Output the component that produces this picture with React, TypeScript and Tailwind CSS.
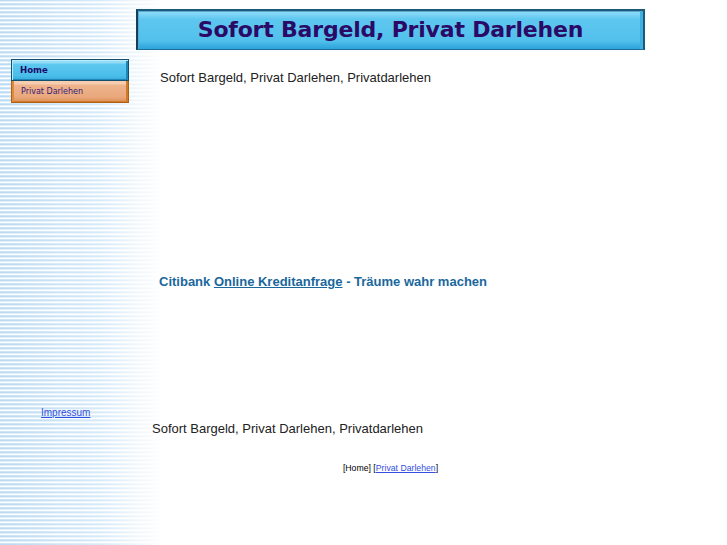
export default function App() {
  return (
    <div className="min-h-[545px] w-full bg-white bg-[linear-gradient(to_right,rgba(255,255,255,0)_0px,rgba(255,255,255,0.45)_100px,#ffffff_162px),repeating-linear-gradient(to_bottom,#b8daf3_0px,#b8daf3_1px,#e2f0fb_1px,#e2f0fb_2px,#ffffff_2px,#ffffff_3px,#cae4f7_3px,#cae4f7_4px)] font-['Liberation_Sans',Arial,sans-serif] text-[#222]">
      <div className="flex">
        <aside className="w-[136px] shrink-0">
          <nav className="ml-[11px] mt-[59px] w-[118px] font-['DejaVu_Sans',Verdana,sans-serif]">
            <a
              href="#"
              className="flex h-[22px] items-center border border-[#14506e] bg-[linear-gradient(to_bottom,#93dcf7_0px,#93dcf7_3px,#5ec8f0_4px,#49bdea_16px,#2d9fd6_22px)] pl-[8px] text-[8.6px] font-bold text-[#1c0b6b] shadow-[inset_1px_1px_0_#b9ecfb,inset_-2px_-1px_0_#1f86b8]"
            >
              Home
            </a>
            <a
              href="#"
              className="flex h-[22px] items-center border border-t-0 border-[#b45e10] bg-[linear-gradient(to_bottom,#f6cdb0_0px,#f6cdb0_3px,#eeb48c_4px,#eaa87c_16px,#d98a4e_22px)] pl-[9px] text-[8px] text-[#36177a] shadow-[inset_2px_0_0_#e08a3a,inset_-2px_-1px_0_#d07a2c]"
            >
              Privat Darlehen
            </a>
          </nav>
          <div className="mt-[303px] pl-[41px] text-[10px] leading-[13px]">
            <a href="#" className="text-[#3350e0] underline">
              Impressum
            </a>
          </div>
        </aside>

        <main className="w-[509px] shrink-0 pt-[9px]">
          <div className="flex h-[41px] items-center justify-center border-l-2 border-t-2 border-b border-r-2 border-l-[#123f5c] border-t-[#1c5a7c] border-b-[#1b6e97] border-r-[#1b5a7a] bg-[linear-gradient(to_bottom,#92dcf7_0px,#7bd3f5_4px,#5ec7f0_8px,#52c0ec_30px,#33a9de_36px,#2a9ed6_41px)] shadow-[inset_1px_1px_0_#5aa8cc,inset_-3px_0_0_#3fb0e0]">
            <h1 className="-mt-[2px] font-['DejaVu_Sans',Verdana,sans-serif] text-[22px] font-bold tracking-[-0.2px] text-[#2a0a66]">
              Sofort Bargeld, Privat Darlehen
            </h1>
          </div>

          <p className="mt-[20px] pl-[24px] text-[13px] leading-[16px]">
            Sofort Bargeld, Privat Darlehen, Privatdarlehen
          </p>

          <p className="mt-[188px] pl-[23px] text-[13px] font-bold leading-[16px] text-[#1a679c]">
            Citibank{" "}
            <a href="#" className="underline">
              Online Kreditanfrage
            </a>{" "}
            - Träume wahr machen
          </p>

          <p className="mt-[131px] pl-[16px] text-[13px] leading-[16px]">
            Sofort Bargeld, Privat Darlehen, Privatdarlehen
          </p>

          <p className="mt-[25px] text-center text-[8.7px] leading-[12px] text-black">
            [Home] [
            <a href="#" className="text-[#3350e0] underline">
              Privat Darlehen
            </a>
            ]
          </p>
        </main>
      </div>
    </div>
  );
}
